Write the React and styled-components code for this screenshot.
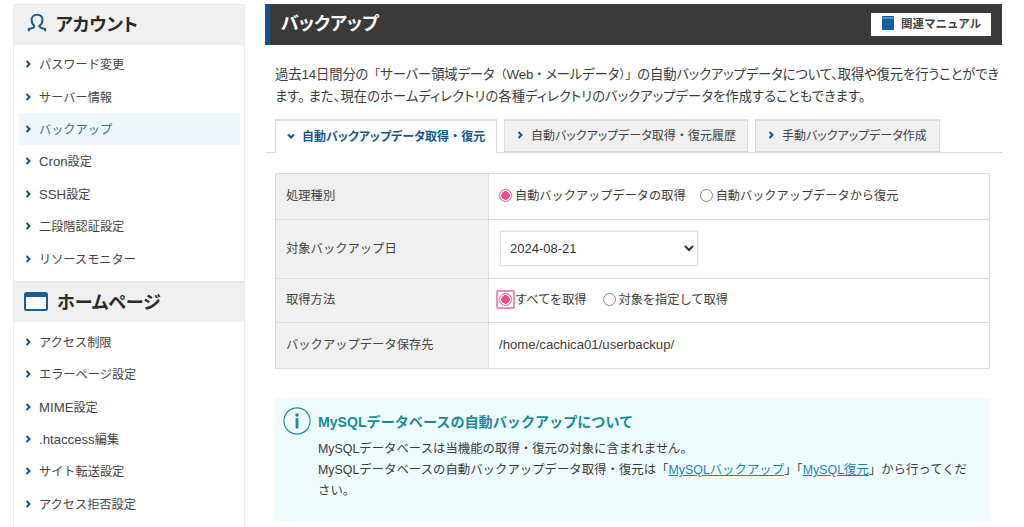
import React from "react";
import styled, { createGlobalStyle } from "styled-components";

const Global = createGlobalStyle`
  html, body { margin: 0; padding: 0; height: 527px; overflow: hidden; background: #fff; }
  body { font-family: "Liberation Sans", "Noto Sans CJK JP", sans-serif; color: #333; }
  * { box-sizing: border-box; }
`;

const Page = styled.div`
  display: flex;
  align-items: flex-start;
  width: 1024px;
  height: 527px;
  overflow: hidden;
  padding: 4px 22px 0 13px;
  gap: 20px;
`;
const Sidebar = styled.nav`
  width: 232px;
  flex: none;
  height: 560px;
  border-left: 1px solid #ececec;
  border-right: 1px solid #ececec;
  border-top: 1px solid #e8e8e8;
`;
const SideHead = styled.h2`
  display: flex;
  align-items: center;
  gap: 9px;
  margin: 0;
  height: ${p => p.$h}px;
  padding-left: ${p => p.$pad}px;
  padding-bottom: ${p => p.$lift}px;
  background: #f0f0f0;
  border-top: ${p => (p.$top ? "1px solid #e6e6e6" : "none")};
  font-size: 18px;
  font-weight: 700;
  color: #2b2b2b;
  font-feature-settings: "palt";
`;
const SideList = styled.ul`
  list-style: none;
  margin: 0;
  padding: ${p => p.$top}px 4px 6px 5px;
`;
const SideItem = styled.li`
  display: flex;
  align-items: center;
  gap: 7px;
  height: 32.4px;
  padding-left: 5px;
  font-size: 12.2px;
  color: ${p => (p.$active ? "#3a6d96" : "#444")};
  background: ${p => (p.$active ? "#eff7fd" : "transparent")};
`;
const Latin = styled.span`
  font-size: 13.2px;
`;
const Main = styled.main`
  width: 737px;
  flex: none;
`;
const TitleBar = styled.header`
  display: flex;
  align-items: center;
  justify-content: space-between;
  height: 41px;
  padding: 0 11px 0 11px;
  background: #3a3a3a;
  border-left: 5px solid #14568c;
`;
const Title = styled.h1`
  margin: 0 0 5px;
  font-size: 18px;
  font-weight: 700;
  color: #fff;
  font-feature-settings: "palt";
`;
const ManualButton = styled.a`
  display: flex;
  align-items: center;
  gap: 7px;
  width: 120px;
  height: 23px;
  padding: 0 0 3px 11px;
  background: #fff;
  font-size: 11.5px;
  font-weight: 700;
  color: #444;
`;
const Intro = styled.div`
  margin: 19px 0 0 10px;
  font-size: 13.3px;
  line-height: 22px;
  color: #3c3c3c;
  white-space: nowrap;
  font-feature-settings: "palt";
`;
const IntroLine = styled.p`
  margin: 0;
  letter-spacing: ${p => p.$track}px;
`;
const FullWidth = styled.span`
  font-feature-settings: normal;
  font-size: 12.2px;
`;
const Tabs = styled.div`
  display: flex;
  gap: 7px;
  margin-top: 11px;
  padding-left: 10px;
  height: 34px;
  border-bottom: 1px solid #d8d8d8;
`;
const Tab = styled.div`
  display: flex;
  align-items: center;
  gap: 7px;
  width: ${p => p.$w}px;
  height: ${p => (p.$active ? 34 : 33)}px;
  padding: 0 0 3px 11px;
  font-size: 12px;
  font-weight: ${p => (p.$active ? 700 : 400)};
  color: ${p => (p.$active ? "#14568c" : "#444")};
  background: ${p => (p.$active ? "#fff" : "#f0f0f0")};
  border: 1px solid #dedede;
  border-bottom: ${p => (p.$active ? "none" : "1px solid #d8d8d8")};
  border-top-width: 2px;
  white-space: nowrap;
  font-feature-settings: "palt";
`;
const Table = styled.div`
  width: 715px;
  margin: 20px 0 0 10px;
  border: 1px solid #dcdcdc;
  border-bottom: none;
`;
const Row = styled.div`
  display: flex;
  height: ${p => p.$h}px;
  border-bottom: 1px solid #dcdcdc;
`;
const Label = styled.div`
  display: flex;
  align-items: center;
  width: 213px;
  flex: none;
  padding: 0 0 3px 10px;
  background: #f0f0f0;
  border-right: 1px solid #e2e2e2;
  font-size: 12.3px;
  color: #444;
`;
const Value = styled.div`
  display: flex;
  align-items: center;
  padding: 0 0 3px 10px;
  font-size: 12.2px;
  color: #3c3c3c;
`;
const PathText = styled.span`
  font-size: 13.2px;
`;
const RadioWrap = styled.label`
  display: flex;
  align-items: center;
  gap: 3px;
  margin-right: ${p => p.$gap}px;
`;
const FocusRing = styled.span`
  display: flex;
  padding: 1px;
  margin: -3px;
  border: 2px solid #f08cba;
  border-radius: 2px;
`;
const Radio = styled.input.attrs({ type: "radio", readOnly: true })`
  appearance: none;
  width: 13px;
  height: 13px;
  margin: 0;
  border-radius: 50%;
  border: 1px solid ${p => (p.checked ? "#ef5b9c" : "#888")};
  background: ${p => (p.checked ? "radial-gradient(circle, #ef4f93 0 4px, #fff 4.5px)" : "#fff")};
`;
const DateSelect = styled.select`
  width: 198px;
  height: 35px;
  margin: 2px 0 0 1px;
  padding-left: 5px;
  background: #fff;
  border: 1px solid #e2e2e2;
  box-shadow: 0 0 2px rgba(0, 0, 0, 0.12);
  border-radius: 0;
  font: 13px "Liberation Sans", sans-serif;
  color: #333;
`;
const InfoBox = styled.section`
  width: 715px;
  height: 123px;
  margin: 29px 0 0 10px;
  padding: 9px 8px 0 8px;
  background: #effcff;
`;
const InfoHead = styled.h3`
  display: flex;
  align-items: center;
  gap: 7px;
  margin: 0;
  font-size: 14.1px;
  font-weight: 700;
  color: #178d9a;
`;
const InfoText = styled.p`
  margin: 4px 0 0 35px;
  font-size: 12.4px;
  line-height: 21px;
  color: #3c3c3c;
`;
const Link = styled.a`
  color: #1d83b8;
  text-decoration: underline;
`;

const Chevron = ({ down, color = "#14568c", size = 8 }) => (
  <svg width={size} height={size} viewBox="0 0 8 8" style={{ flex: "none" }}>
    <path d={down ? "M1 2.5 L4 5.5 L7 2.5" : "M2.5 1 L5.5 4 L2.5 7"} fill="none" stroke={color} strokeWidth="2" />
  </svg>
);
const UserIcon = () => (
  <svg width="20" height="20" viewBox="0 0 22 22" fill="none" stroke="#1a5f92" strokeWidth="2.2">
    <path d="M8.5 14.5 C5.5 12.5 5 9.5 5 7.5 C5 4 7.5 2 11 2 C14.5 2 17 4 17 7.5 C17 9.5 16.5 12.5 13.5 14.5 C14.5 16.5 17 17 20 17.5 L20 20 M8.5 14.5 C7.5 16.5 5 17 2 17.5 L2 20" />
  </svg>
);
const WindowIcon = () => (
  <svg width="24" height="19" viewBox="0 0 24 19">
    <rect x="1" y="1" width="22" height="17" rx="1.5" fill="#fff" stroke="#1a5f92" strokeWidth="2" />
    <rect x="1" y="1" width="22" height="4" fill="#1a5f92" />
  </svg>
);
const BookIcon = () => (
  <svg width="12" height="14" viewBox="0 0 12 14">
    <rect x="0" y="0" width="12" height="14" fill="#14609e" />
    <rect x="0" y="1.5" width="12" height="1" fill="#8fb6d4" />
  </svg>
);
const InfoIcon = () => (
  <svg width="28" height="28" viewBox="0 0 30 30" fill="none">
    <circle cx="15" cy="15" r="14" stroke="#178d9a" strokeWidth="1.2" />
    <circle cx="15" cy="8.5" r="1.9" fill="#178d9a" />
    <rect x="13.5" y="12" width="3" height="11" fill="#178d9a" />
  </svg>
);

const account = [
  "パスワード変更",
  "サーバー情報",
  "バックアップ",
  <span><Latin>Cron</Latin>設定</span>,
  <span><Latin>SSH</Latin>設定</span>,
  "二段階認証設定",
  "リソースモニター",
];
const homepage = [
  "アクセス制限",
  "エラーページ設定",
  <span><Latin>MIME</Latin>設定</span>,
  <span><Latin>.htaccess</Latin>編集</span>,
  "サイト転送設定",
  "アクセス拒否設定",
];

export default function App() {
  return (
    <>
      <Global />
      <Page>
        <Sidebar>
          <SideHead $h={40} $pad={13} $lift={5}><UserIcon />アカウント</SideHead>
          <SideList $top={3}>
            {account.map((t, i) => (
              <SideItem key={i} $active={t === "バックアップ"}><Chevron />{t}</SideItem>
            ))}
          </SideList>
          <SideHead $h={41} $pad={10} $lift={1} $top><WindowIcon />ホームページ</SideHead>
          <SideList $top={4}>
            {homepage.map((t, i) => (
              <SideItem key={i}><Chevron />{t}</SideItem>
            ))}
          </SideList>
        </Sidebar>
        <Main>
          <TitleBar>
            <Title>バックアップ</Title>
            <ManualButton><BookIcon />関連マニュアル</ManualButton>
          </TitleBar>
          <Intro>
            <IntroLine $track={-0.1}>過去14日間分の<FullWidth>「</FullWidth>サーバー領域データ<FullWidth>（</FullWidth>Web<FullWidth>・</FullWidth>メールデータ<FullWidth>）」</FullWidth>の自動バックアップデータについて、取得や復元を行うことができ</IntroLine>
            <IntroLine $track={0.08}>ます。 また、現在のホームディレクトリの各種ディレクトリのバックアップデータを作成することもできます。</IntroLine>
          </Intro>
          <Tabs>
            <Tab $active $w={222}><Chevron down /><span>自動バックアップデータ取得<FullWidth>・</FullWidth>復元</span></Tab>
            <Tab $w={244}><Chevron /><span>自動バックアップデータ取得<FullWidth>・</FullWidth>復元履歴</span></Tab>
            <Tab $w={185}><Chevron />手動バックアップデータ作成</Tab>
          </Tabs>
          <Table>
            <Row $h={46}>
              <Label>処理種別</Label>
              <Value>
                <RadioWrap $gap={14}><Radio checked />自動バックアップデータの取得</RadioWrap>
                <RadioWrap $gap={14}><Radio />自動バックアップデータから復元</RadioWrap>
              </Value>
            </Row>
            <Row $h={59}>
              <Label>対象バックアップ日</Label>
              <Value>
                <DateSelect defaultValue="2024-08-21"><option>2024-08-21</option></DateSelect>
              </Value>
            </Row>
            <Row $h={44}>
              <Label>取得方法</Label>
              <Value>
                <RadioWrap $gap={16}><FocusRing><Radio checked /></FocusRing>すべてを取得</RadioWrap>
                <RadioWrap $gap={14}><Radio />対象を指定して取得</RadioWrap>
              </Value>
            </Row>
            <Row $h={46}>
              <Label>バックアップデータ保存先</Label>
              <Value><PathText>/home/cachica01/userbackup/</PathText></Value>
            </Row>
          </Table>
          <InfoBox>
            <InfoHead><InfoIcon />MySQLデータベースの自動バックアップについて</InfoHead>
            <InfoText>
              MySQLデータベースは当機能の取得・復元の対象に含まれません。<br />
              MySQLデータベースの自動バックアップデータ取得・復元は「<Link>MySQLバックアップ</Link>」「<Link>MySQL復元</Link>」から行ってくだ<br />
              さい。
            </InfoText>
          </InfoBox>
        </Main>
      </Page>
    </>
  );
}
